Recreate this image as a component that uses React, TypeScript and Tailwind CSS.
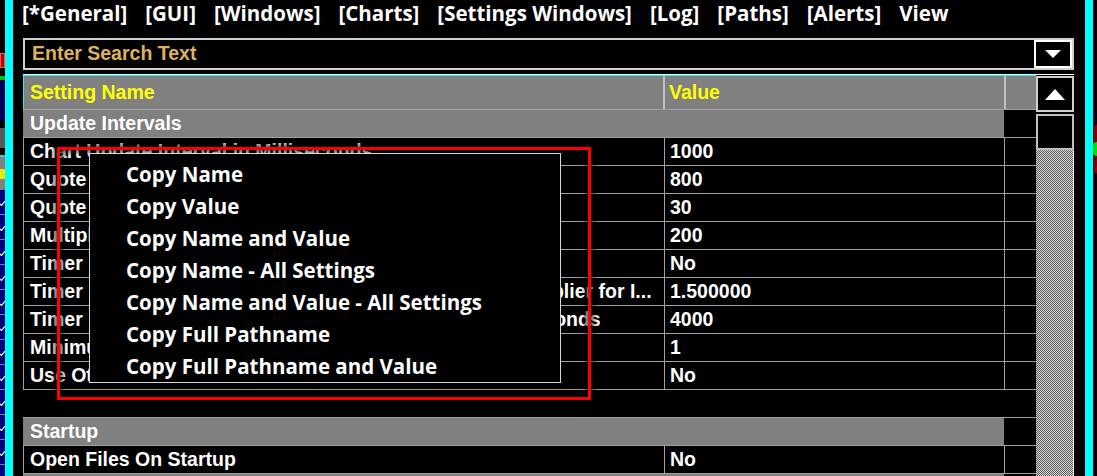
import { useState } from 'react';

const menuBar = ['[*General]', '[GUI]', '[Windows]', '[Charts]', '[Settings Windows]', '[Log]', '[Paths]', '[Alerts]', 'View'];

const contextItems = [
  'Copy Name',
  'Copy Value',
  'Copy Name and Value',
  'Copy Name - All Settings',
  'Copy Name and Value - All Settings',
  'Copy Full Pathname',
  'Copy Full Pathname and Value',
];

const intervalRows = [
  { name: 'Chart Update Interval in Milliseconds', value: '1000' },
  { name: 'Quote Board Update Interval in Milliseconds', value: '800' },
  { name: 'Quote Window Update Interval Multiplier', value: '30' },
  { name: 'Multiple Chart Update Delay in Milliseconds', value: '200' },
  { name: 'Timer Based Chart Updating', value: 'No' },
  { name: 'Timer Based Chart Update Interval in Milliseconds: Multiplier for I...', value: '1.500000' },
  { name: 'Timer Based Chart Updates Maximum Interval in Milliseconds', value: '4000' },
  { name: 'Minimum Chart Update Interval', value: '1' },
  { name: 'Use Other Time Zone Offset', value: 'No' },
];

const cellFont = "font-['Liberation_Sans',Arial,sans-serif] text-[19.5px] font-bold";
const uiFont = "font-['Open_Sans','Noto_Sans',sans-serif] text-[20.5px] font-bold";

function GroupRow({ label }: { label: string }) {
  return (
    <div className="flex h-[28px] shrink-0 border-b border-[#a0a0a0]">
      <div className={`flex w-[981px] items-center bg-[#808080] pl-[7px] text-white ${cellFont}`}>{label}</div>
      <div className="flex-1" />
    </div>
  );
}

function SettingRow({ name, value }: { name: string; value: string }) {
  return (
    <div className={`flex h-[28px] shrink-0 border-b border-[#a0a0a0] text-white ${cellFont}`}>
      <div className="flex w-[641px] items-center overflow-hidden whitespace-nowrap border-l border-[#a0a0a0] pl-[6px]">{name}</div>
      <div className="flex w-[340px] items-center border-l border-[#a0a0a0] pl-[5px]">{value}</div>
      <div className="flex-1 border-l border-[#a0a0a0]" />
    </div>
  );
}

function Tick() {
  return (
    <svg width="5" height="6" viewBox="0 0 5 6" className="mt-[10px]">
      <polyline points="0,4 1.5,5.5 5,1" fill="none" stroke="#ffffff" strokeWidth="1.2" />
    </svg>
  );
}

// strip of the neighbouring window peeking in on the left
function LeftStrip() {
  return (
    <div className="flex w-[5px] shrink-0 flex-col overflow-hidden">
      <div className="h-[53px] shrink-0" />
      <div className="h-[15px] shrink-0 border border-[#ff5050] bg-[#c00000]" />
      <div className="h-[8px] shrink-0" />
      <div className="h-[4px] shrink-0 bg-[#00c000]" />
      <div className="h-[40px] shrink-0 bg-[#00005a]" />
      <div className="h-[8px] shrink-0" />
      <div className="h-[20px] shrink-0 bg-[#5a5a5a]" />
      <div className="h-[7px] shrink-0" />
      <div className="h-[2px] shrink-0 bg-[#40c8c8]" />
      <div className="flex h-[33px] shrink-0 flex-col bg-[#808080]">
        <div className="mt-[12px] h-[10px] bg-[#e8e800]" />
      </div>
      {Array.from({ length: 12 }).map((_, i) => (
        <div key={i} className="flex h-[25px] shrink-0 border-b border-[#7a7a9a] bg-[#00007a]">
          <Tick />
        </div>
      ))}
    </div>
  );
}

export default function App() {
  const [search] = useState('');

  return (
    <div className="relative flex h-[476px] w-[1097px] overflow-hidden bg-black">
      <LeftStrip />
      <div className="w-[8px] shrink-0 bg-[#00ffff]" />
      <div className="w-[10px] shrink-0" />

      <div className="flex w-[1051px] shrink-0 flex-col overflow-hidden">
        {/* tab strip */}
        <div className={`-ml-px flex h-[38px] shrink-0 gap-[18px] leading-[26px] text-white ${uiFont}`}>
          {menuBar.map((item) => (
            <span key={item} className="whitespace-nowrap">{item}</span>
          ))}
        </div>

        {/* search box */}
        <div className="flex h-[32px] shrink-0 border-2 border-[#d0d0d0]">
          <div className={`flex flex-1 items-center pl-[7px] text-[#ddb25c] ${cellFont}`}>
            {search || 'Enter Search Text'}
          </div>
          <div className="flex w-[38px] items-center justify-center border-2 border-white">
            <svg width="16" height="9" viewBox="0 0 16 9">
              <polygon points="0,0 16,0 8,8" fill="#ffffff" />
            </svg>
          </div>
        </div>

        {/* settings grid */}
        <div className="mt-[4px] flex min-h-0 flex-1 border-t border-white">
          <div className="flex w-[1013px] flex-col overflow-hidden">
            <div className={`flex h-[35px] shrink-0 border-b border-l border-t border-b-[#a0a0a0] border-l-[#00ffff] border-t-[#00ffff] bg-[#808080] text-[#ffff00] ${cellFont}`}>
              <div className="flex w-[639px] items-center pl-[6px]">Setting Name</div>
              <div className="w-[2px] bg-[#c0c0c0]" />
              <div className="flex w-[339px] items-center pl-[4px]">Value</div>
              <div className="w-[2px] bg-[#c0c0c0]" />
              <div className="flex-1" />
            </div>
            <GroupRow label="Update Intervals" />
            {intervalRows.map((r) => (
              <SettingRow key={r.name} name={r.name} value={r.value} />
            ))}
            <div className="h-[28px] shrink-0 border-b border-[#a0a0a0]" />
            <GroupRow label="Startup" />
            <SettingRow name="Open Files On Startup" value="No" />
            <GroupRow label="" />
          </div>

          {/* vertical scrollbar */}
          <div className="flex w-[38px] flex-col pt-px">
            <div className="flex h-[36px] shrink-0 items-center justify-center border-2 border-[#d0d0d0]">
              <svg width="20" height="11" viewBox="0 0 20 11">
                <polygon points="10,0 20,11 0,11" fill="#ffffff" />
              </svg>
            </div>
            <div className="mt-[2px] h-[36px] shrink-0 border-2 border-[#c0c0c0]" />
            <div className="flex-1 border-r border-white bg-[repeating-conic-gradient(#d8d8d8_0%_25%,#5c5c5c_0%_50%)] bg-[length:2px_2px]" />
          </div>
        </div>
      </div>

      <div className="w-[11px] shrink-0" />
      <div className="w-[8px] shrink-0 bg-[#00ffff]" />
      <div className="flex w-[4px] shrink-0 flex-col">
        <div className="h-[125px]" />
        <div className="flex h-[48px] items-center bg-[#7a0000]">
          <div className="h-[14px] w-[4px] rounded-l-full bg-[#00e000]" />
        </div>
      </div>

      {/* highlight frame around the menu */}
      <div className="absolute left-[57px] top-[147px] h-[253px] w-[534px] border-[3px] border-[#ff0000] shadow-[0_0_6px_2px_rgba(0,0,0,0.8),inset_0_0_6px_2px_rgba(0,0,0,0.8)]" />

      {/* right-click menu */}
      <div className="absolute left-[89px] top-[153px] h-[230px] w-[472px] border border-[#d8d8d8] bg-black pt-[4px]">
        {contextItems.map((item) => (
          <div key={item} className={`flex h-[32px] items-center whitespace-pre pl-[36px] text-white ${uiFont}`}>
            {item}
          </div>
        ))}
      </div>
    </div>
  );
}
